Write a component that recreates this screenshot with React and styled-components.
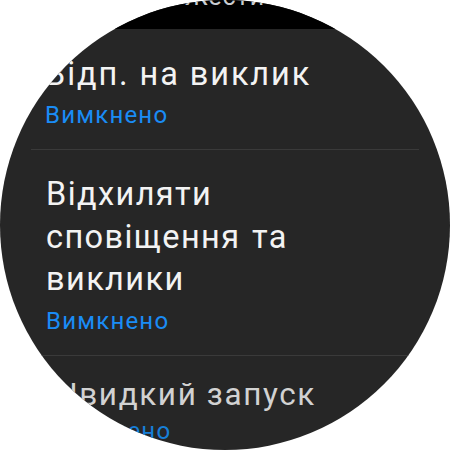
import React from "react";
import styled, { createGlobalStyle } from "styled-components";

const Global = createGlobalStyle`
  html, body { margin: 0; padding: 0; background: #ffffff; }
  body { font-family: Roboto, "Noto Sans", sans-serif; }
`;

const Watch = styled.div`
  width: 450px;
  height: 450px;
  border-radius: 50%;
  overflow: hidden;
  background: #262626;
  display: flex;
  flex-direction: column;
`;

const Header = styled.div`
  height: 29px;
  flex: none;
  background: #000000;
  overflow: hidden;
  display: flex;
  justify-content: center;
`;

const HeaderTitle = styled.div`
  margin-top: -18px;
  font-size: 25px;
  line-height: 30px;
  letter-spacing: 1px;
  color: #c9ccd0;
  white-space: nowrap;
`;

const List = styled.div`
  display: flex;
  flex-direction: column;
`;

const Item = styled.div`
  padding: ${(p) => p.$top}px 20px 19.2px ${(p) => p.$left}px;
  display: flex;
  flex-direction: column;
`;

const Title = styled.div`
  font-size: ${(p) => p.$size}px;
  line-height: 42.5px;
  letter-spacing: ${(p) => p.$track}px;
  word-spacing: ${(p) => p.$words || 0}px;
  color: ${(p) => (p.$dim ? "#d2d2d2" : "#f3f3f3")};
  white-space: pre-line;
`;

const Sub = styled.div`
  margin-top: ${(p) => p.$gap}px;
  font-size: 24px;
  line-height: 30px;
  letter-spacing: 1.2px;
  color: ${(p) => (p.$dim ? "#177fd8" : "#1a8cf5")};
`;

const Divider = styled.div`
  height: 1px;
  margin: 0 31px;
  background: #3a3a3a;
`;

export default function App() {
  return (
    <>
      <Global />
      <Watch>
        <Header>
          <HeaderTitle>Жести</HeaderTitle>
        </Header>
        <List>
          <Item $top={23.6} $left={45}>
            <Title $size={32.5} $track={1.9}>Відп. на виклик</Title>
            <Sub $gap={4.6}>Вимкнено</Sub>
          </Item>
          <Divider />
          <Item $top={23.6} $left={46}>
            <Title $size={32.5} $track={1.4} $words={2}>{"Відхиляти\nсповіщення та\nвиклики"}</Title>
            <Sub $gap={4.6}>Вимкнено</Sub>
          </Item>
          <Divider />
          <Item $top={18} $left={48}>
            <Title $size={31.5} $track={1.6} $dim>Швидкий запуск</Title>
            <Sub $gap={-0.7} $dim>Вимкнено</Sub>
          </Item>
        </List>
      </Watch>
    </>
  );
}
